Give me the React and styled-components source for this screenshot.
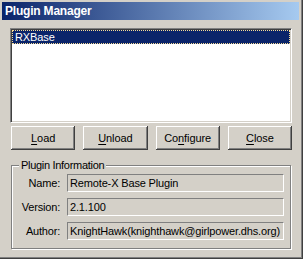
import React from "react";
import styled, { createGlobalStyle } from "styled-components";

const Global = createGlobalStyle`
  html, body { margin: 0; padding: 0; background: #d4d0c8; }
  body { font-family: "Liberation Sans", Arial, sans-serif; font-size: 11px; }
  * { box-sizing: border-box; }
`;

const Win = styled.div`
  width: 303px;
  height: 259px;
  background: #d4d0c8;
  padding: 2px 4px 4px 2px;
  box-shadow: inset -1px -1px #404040, inset -2px -2px #808080;
  display: flex;
  flex-direction: column;
`;

const TitleBar = styled.div`
  height: 18px;
  flex: none;
  background: linear-gradient(to right, #0a246a, #a6caf0);
  color: #fff;
  font-weight: bold;
  font-size: 12px;
  letter-spacing: -0.2px;
  display: flex;
  align-items: center;
  padding-left: 3px;
`;

const Client = styled.div`
  flex: 1;
  padding: 8px 7px 6px 8px;
  display: flex;
  flex-direction: column;
`;

const ListBox = styled.div`
  height: 95px;
  background: #fff;
  border-style: solid;
  border-width: 1px;
  border-color: #808080 #fff #fff #808080;
  box-shadow: inset 1px 1px #404040, inset -1px -1px #d4d0c8;
  padding: 1px;
`;

const ListItem = styled.div`
  height: 14px;
  line-height: 12px;
  padding-left: 2px;
  background: ${(p) => (p.$selected ? "#0a246a" : "transparent")};
  color: ${(p) => (p.$selected ? "#fff" : "#000")};
  border: 1px dotted ${(p) => (p.$selected ? "#f5db95" : "transparent")};
  letter-spacing: -0.1px;
`;

const ButtonRow = styled.div`
  margin-top: 3px;
  display: grid;
  grid-template-columns: repeat(4, 1fr);
  column-gap: 8px;
  padding-left: 1px;
`;

const Button = styled.button`
  height: 24px;
  background: #d4d0c8;
  border: none;
  margin: 0;
  padding: 0;
  font-family: "Liberation Sans", Arial, sans-serif;
  font-size: 11px;
  letter-spacing: -0.1px;
  color: #000;
  box-shadow: inset -1px -1px #404040, inset 1px 1px #fff, inset -2px -2px #808080, inset 2px 2px #d4d0c8;
  u { text-decoration-thickness: 1px; text-underline-offset: 2px; }
`;

const Group = styled.fieldset`
  margin: 9px 0 0 1px;
  width: 280px;
  padding: 2px 6px 8px 0;
  border: 1px solid #808080;
  box-shadow: inset 1px 1px #fff, 1px 1px #fff;
  display: grid;
  grid-template-columns: 48px 1fr;
  column-gap: 7px;
  row-gap: 6px;
  min-inline-size: 0;
`;

const Legend = styled.legend`
  margin-left: 7px;
  padding: 0 2px;
  height: 13px;
  line-height: 13px;
  background: #d4d0c8;
  letter-spacing: -0.3px;
`;

const Label = styled.div`
  height: 18px;
  display: flex;
  align-items: center;
  justify-content: flex-end;
  letter-spacing: -0.2px;
  white-space: nowrap;
`;

const Field = styled.div`
  height: 18px;
  display: flex;
  align-items: center;
  padding-left: 2px;
  border-style: solid;
  border-width: 1px;
  border-color: #808080 #fff #fff #808080;
  letter-spacing: -0.15px;
  white-space: nowrap;
  overflow: hidden;
`;

const info = [
  ["Name:", "Remote-X Base Plugin"],
  ["Version:", "2.1.100"],
  ["Author:", "KnightHawk(knighthawk@girlpower.dhs.org)"],
];

export default function App() {
  return (
    <>
      <Global />
      <Win>
        <TitleBar>Plugin Manager</TitleBar>
        <Client>
          <ListBox>
            <ListItem $selected>RXBase</ListItem>
          </ListBox>
          <ButtonRow>
            <Button><u>L</u>oad</Button>
            <Button><u>U</u>nload</Button>
            <Button>Co<u>n</u>figure</Button>
            <Button><u>C</u>lose</Button>
          </ButtonRow>
          <Group>
            <Legend>Plugin Information</Legend>
            {info.map(([k, v]) => (
              <React.Fragment key={k}>
                <Label>{k}</Label>
                <Field>{v}</Field>
              </React.Fragment>
            ))}
          </Group>
        </Client>
      </Win>
    </>
  );
}
